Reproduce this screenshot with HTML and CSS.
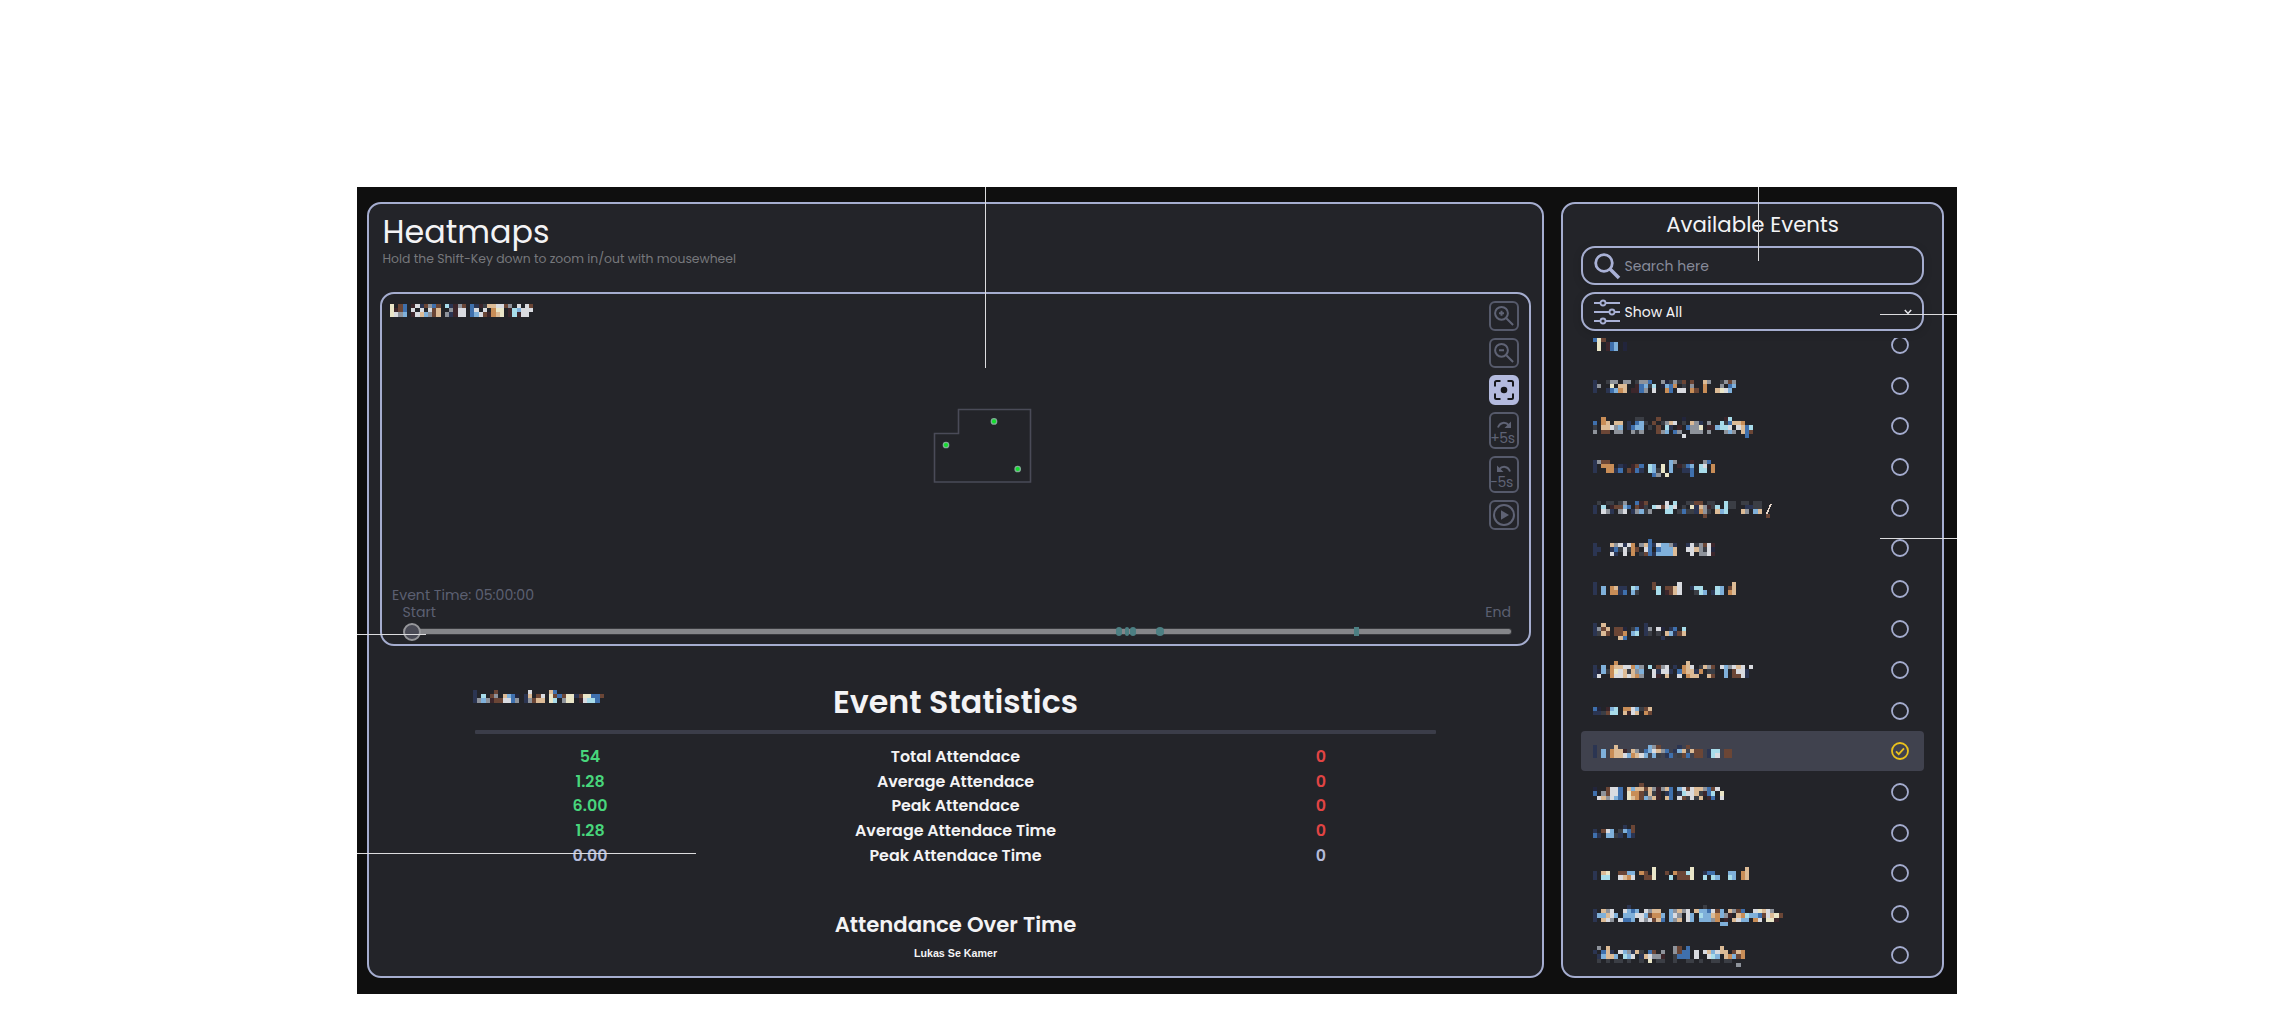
FILE: index.html
```html
<!DOCTYPE html>
<html lang="en">
<head>
<meta charset="utf-8">
<title>Heatmaps</title>
<link rel="stylesheet" href="styles.css">
</head>
<body>
<div class="stage">
  <main class="panel main">
    <h1 class="title">Heatmaps</h1>
    <p class="hint">Hold the Shift-Key down to zoom in/out with mousewheel</p>
    <section class="map">
      <svg class="floor" viewBox="0 0 1148 350" width="1148" height="350">
        <path d="M552.500 139.500h24v-24h72v72.500h-96z" fill="none" stroke="#4a4b58" stroke-width="1.600"/>
        <g fill="#12e02c" stroke="#7fae95" stroke-width="1.300"><circle cx="564" cy="151" r="2.700"/><circle cx="612" cy="127.400" r="2.700"/><circle cx="635.700" cy="175" r="2.700"/></g>
      </svg>
      <div class="map-top">
        <svg class="mosaic map-name" data-name="map"></svg>
        <div class="tools">
          <button class="tool"><svg viewBox="0 0 26 26"><circle cx="10.500" cy="10.300" r="6.400"/><path d="M15.300 15.200l6.800 6.800M10.500 7.800v5M8 10.300h5"/></svg></button>
          <button class="tool"><svg viewBox="0 0 26 26"><circle cx="10.500" cy="10.300" r="6.400"/><path d="M15.300 15.200l6.800 6.800M8 10.300h5"/></svg></button>
          <button class="tool active"><svg viewBox="0 0 26 26"><path d="M4 9.500V5.500a1.500 1.500 0 0 1 1.500-1.500H9.500M16.500 4h4A1.500 1.500 0 0 1 22 5.500v4M22 16.500v4a1.500 1.500 0 0 1-1.500 1.500h-4M9.500 22h-4A1.500 1.500 0 0 1 4 20.500v-4"/><circle class="solid" cx="13" cy="13" r="3.300"/></svg></button>
          <button class="tool tall"><svg viewBox="0 0 26 13"><path d="M7 10.500C9 5 14.500 4.500 18 8.500"/><path class="solid" d="M20 4.500v6.500h-6.500z"/></svg><span>+5s</span></button>
          <button class="tool tall"><svg viewBox="0 0 26 13"><path d="M19 10.500C17 5 11.500 4.500 8 8.500"/><path class="solid" d="M6 4.500v6.500h6.500z"/></svg><span>-5s</span></button>
          <button class="tool"><svg viewBox="0 0 26 26"><circle cx="13" cy="13" r="10"/><path class="solid" d="M10 8.300v9.400l8-4.700z"/></svg></button>
        </div>
      </div>
      <div class="map-foot">
        <div class="time">Event Time: 05:00:00</div>
        <div class="ends"><span>Start</span><span>End</span></div>
        <div class="slider">
          <i class="mark" style="left:710.500px;width:6.500px"></i>
          <i class="mark" style="left:720px;width:4px"></i>
          <i class="mark" style="left:724.500px;width:6.500px"></i>
          <i class="mark" style="left:751px;width:8px"></i>
          <i class="mark square" style="left:949px;width:5px"></i>
          <i class="thumb"></i>
        </div>
      </div>
    </section>
    <section class="stats">
      <div class="stats-head">
        <svg class="mosaic" data-name="stats"></svg>
        <h2>Event Statistics</h2>
      </div>
      <div class="rule"></div>
      <div class="stat"><b class="up">54</b><span>Total Attendace</span><b class="down">0</b></div>
      <div class="stat"><b class="up">1.28</b><span>Average Attendace</span><b class="down">0</b></div>
      <div class="stat"><b class="up">6.00</b><span>Peak Attendace</span><b class="down">0</b></div>
      <div class="stat"><b class="up">1.28</b><span>Average Attendace Time</span><b class="down">0</b></div>
      <div class="stat"><b class="even">0.00</b><span>Peak Attendace Time</span><b class="even">0</b></div>
    </section>
    <h3 class="over">Attendance Over Time</h3>
    <p class="legend">Lukas Se Kamer</p>
  </main>
  <aside class="panel side">
    <h2 class="side-title">Available Events</h2>
    <div class="field search">
      <svg viewBox="0 0 28 28"><circle cx="11" cy="11" r="8.300" stroke-width="2.800"/><path d="M17 17l9 9" stroke-width="3.600"/></svg>
      <span>Search here</span>
    </div>
    <div class="field select">
      <svg viewBox="0 0 28 28"><path d="M1 5h6.500M12.500 5H27M1 14h15.500M21.500 14H27M1 23h6.500M12.500 23H27" stroke-width="2"/><circle cx="10" cy="5" r="2.500" stroke-width="1.800"/><circle cx="19" cy="14" r="2.500" stroke-width="1.800"/><circle cx="10" cy="23" r="2.500" stroke-width="1.800"/></svg>
      <span>Show All</span>
      <svg class="caret" viewBox="0 0 8 6"><path d="M.8 1L4 4.500 7.200 1" stroke-width="1.500"/></svg>
    </div>
    <div class="list"><ul id="events"></ul></div>
  </aside>
  <i class="guide v" style="left:628px;top:0;height:181px"></i>
  <i class="guide v" style="left:1401px;top:0;height:74px"></i>
  <i class="guide h" style="left:1523px;top:127px;width:77px"></i>
  <i class="guide h" style="left:1523px;top:351px;width:77px"></i>
  <i class="guide h" style="left:0;top:447px;width:69px"></i>
  <i class="guide h" style="left:0;top:666px;width:339px"></i>
</div>
<script src="app.js"></script>
</body>
</html>
```
FILE: app.js
```js
const CELL = 4.22;
const COLORS = {
  n: '#2b3552', d: '#22253c', b: '#3f70ad', s: '#7fb0da', c: '#a8dcea', w: '#d9dbe0',
  g: '#8e939b', k: '#3b3e45', o: '#c88d57', t: '#dcbb96', y: '#eae6c8', r: '#6b4636', m: '#3c262b'
};

const NAMES = {
  map: ['y.rb.mwnrgbr.cnmgr.bnmkttwwrg.w.wr', 'ymrb.w.w.wrt..gmww.bw.w.oyy.mcswww', 'ywgs.mwtsgrt.gnmww.bswrmoty.mcmww.'],
  stats: ['n....r.......w....tb...........', 'n.c.rg.tsbd.nt.rw.yrbryynryybbr', 'ngsgmrrwwbg.ngrtt.yc.gyy.mwccb.']
};

/* Each event: vertical offset of the name from the row centre, then its cell rows. */
const EVENTS = [
  [-7.3, ['byr.....', '.y.mbs.d', '.y.mbs.d']],
  [-5.4, ['n..kgg.gg.kggb..gdkgkr.r..tg..kgrg', 'ng..y.tt..mbskc.dsbo.k.g..o...g.bs', 'n..nbsot.mmbg.w..ob.ww.or.o..tyws.']],
  [-9.2, ['..o.......kk...r.....d.........mc.....', 'b.ot.tt.n.bsk.r.kgtw.k.tgn.g..ckbtto..', 'k.ttwgs.nbss.k.r.cn.m.bggy.mmsccw.wtbc', 'g.rr.gg..gkg...rgs.bg..ggg.g...gsg.tbr', '.....................w..............b.']],
  [-6.7, ['ngrr..............sg...m..gb..', 'n.ooo.nd.mrb.cs.y.s.mkbs.cw.o', 'n..oonb.rmbn.csky.s..nnb.cc.o', '..............bg.y.....b.....']],
  [-6.3, ['.k.kk.kg..bmr....w.c..kkrr.kk..ckk.kk.kk', 'n.c.mrrsb.rmk.cwrwcw.k.yntgmkc.ckk..nnkk', 'n.wgn.gw.ngskg...cc.kbkknogk.tsc...tg.st.', '..........................r..............r']],
  [-9.2, ['.............b...............', 'n...tgwnwo.gtbnwssgn..nwkgrwm', 'nn..nbkwkor.wb.bssst..wwtgkwd', 'n...wn.w.o.krbnsssst...w.ggwm']],
  [-7, ['n.............r.....w............t', 'n.s.otnn.cs...rc.rrtw..ncc...cs.rt', 'n.s.oonb.sk....c.mrtw...kcs.ncs.ot']],
  [-6.7, ['n.t.........n.........', 'ngrt.rrd.kb.ng.wd.nb.c', 'nktr.rro.sc.nk.k.tsnrt', '......tb........n.....']],
  [-9, ['.....o................t...............', 'n.s.ottwwosg.c.rgw.n.otw.ktgr.wsgwtw.w', 'ndskoywtktgs..wnwwn.bottno.kk..s.rwwn.', 'nw..owwtwtog..wm.t..w.ott..tr..s.rrwn.']],
  [-3.7, ['bd.msc.oowskrt', 'nnkrcc.tmwt.or']],
  [-6.6, ['n....t.......sgr....n.r..........', 'n.s.ottm.tg.bswtgb.nst.trr.ncc.rr', 'n.s.ottwsotws.sk.nb.krb.rr.ncw.rr']],
  [-8.8, ['...........r...................', 'd..rwwb.tsttrtgmgtb.swrwttgbrw.', 'b.grwwb.yoorktkm.nb.ncwwtkmbc.y', '.wtgwsb.ytorsgtm.tb.wrkwkt.mb.w']],
  [-7.7, ['.......n.r', 'n.rws.ksbr', 'bn.sskn.bn']],
  [-6.8, ['..............y........y............t', 'n.ty..rrss.or.y..r.orrcy..nbb...ss.ot', 'n.cc..wtow..rry...c.rrry..c.cs..cs.ot']],
  [-9.4, ['........n.................k..........', 'n.tgw..wsbs.wgtt..sgtgw.tssbwrs.tgrb..wytwg', 'nsstws.ssswwsroos.swg.ws.csstosgm.tocssbrwtyr', 'n.twg.wbbs.wgwrtb.sgt.ws.sssgo.m.twss.ow.yym', '..............................ss........']],
  [-8.4, ['.g.t...............gr.b.......t.....', 'n.btn.wsgntk.br.g..grbb.w.wtswtt.rto', '.nstts.csw.ntwggm..kbbb.w..wcs.tosro', '.k.k.kk.k..k.y.kk..k..kk.k..kk.kk...', '..................................g.']]
];

function drawMosaic(svg, rows) {
  const width = Math.max(...rows.map(row => row.length)) * CELL;
  const height = rows.length * CELL;
  svg.setAttribute('width', width);
  svg.setAttribute('height', height);
  svg.innerHTML = rows.map((row, y) => [...row].map((key, x) => COLORS[key]
    ? `<rect x="${x * CELL}" y="${y * CELL}" width="${CELL}" height="${CELL}" fill="${COLORS[key]}"/>` : '').join('')).join('');
}

document.querySelectorAll('[data-name]').forEach(svg => drawMosaic(svg, NAMES[svg.dataset.name]));

const list = document.getElementById('events');
EVENTS.forEach(([offset, rows], index) => {
  const item = document.createElement('li');
  const selected = index === 10;
  item.className = selected ? 'event selected' : 'event';
  item.innerHTML = `<svg class="mosaic" style="margin-top:${20 + offset}px"></svg>
    <svg class="radio" viewBox="0 0 18 18"><circle cx="9" cy="9" r="8"/>${selected ? '<path d="M5 9.400l2.700 2.700L13 6.400"/>' : ''}</svg>`;
  drawMosaic(item.querySelector('.mosaic'), rows);
  if (index === 4) {
    item.querySelector('.mosaic').insertAdjacentHTML('beforeend', '<path d="M173.500 13.500L178 3" stroke="#e9d9cc" stroke-width="1.600"/>');
  }
  list.append(item);
});
```
FILE: styles.css
```css
* { box-sizing: border-box; }
body { margin: 0; background: #fff; font-family: Poppins, Inter, sans-serif; }
h1, h2, h3, p, ul { margin: 0; padding: 0; font-weight: 400; }
svg { display: block; flex: none; }

.stage {
  position: relative;
  display: grid;
  grid-template-columns: 1177px 383px;
  column-gap: 17px;
  width: 1600px;
  height: 807px;
  margin: 187px 0 0 357px;
  padding: 15px 13px 16px 10px;
  background: #0f0f0f;
}
.panel {
  border: 2px solid #a5adcf;
  border-radius: 14px;
  background: #232429;
  color: #f3f3f5;
  overflow: hidden;
}

.main { padding: 13px 11px 0; }
.title { padding-left: 2.500px; font-size: 31.800px; line-height: 30px; font-weight: 400; }
.hint { padding-left: 2.500px; margin-top: 2.500px; font-size: 12.400px; line-height: 18px; color: #77787c; white-space: nowrap; }

.map {
  position: relative;
  display: flex;
  flex-direction: column;
  justify-content: space-between;
  height: 354px;
  margin-top: 24.500px;
  border: 2px solid #a5adcf;
  border-radius: 14px;
}
.floor { position: absolute; left: 0; top: 0; }
.map-top { display: flex; justify-content: space-between; padding: 7px 10px 0 7.500px; }
.map-name { margin-top: 3.300px; }
.tools { display: flex; flex-direction: column; gap: 7px; }
.tool {
  display: block;
  width: 30px;
  height: 30px;
  padding: 0;
  border: 2px solid #565a6b;
  border-radius: 6px;
  background: none;
  color: #5f6375;
  font: 15px/15px Poppins, Inter, sans-serif;
}
.tool svg { width: 26px; fill: none; stroke: currentColor; stroke-width: 2; }
.tool .solid { fill: currentColor; stroke: none; }
.tool.active { border-color: #b3bade; background: #b3bade; color: #15161a; }
.tool.tall { height: 37px; text-align: left; }
.tool.tall svg { margin-top: 2px; }
.tool.tall span { display: block; margin: 1px 0 0 -.8px; font-size: 14px; letter-spacing: -.4px; }

.map-foot { padding: 0 18px 10px 10px; font-size: 14.100px; line-height: 17px; color: #5c6072; }
.time { margin-top: -1px; }
.ends { display: flex; justify-content: space-between; padding-left: 10.500px; }
.slider {
  position: relative;
  height: 5px;
  margin: 8.500px 0 0 13px;
  border-radius: 3px;
  background: #85868a;
  box-shadow: 0 0 0 1px #393a3e;
}
.thumb { position: absolute; left: -2.300px; top: -6.500px; width: 18px; height: 18px; border: 2px solid #96979b; border-radius: 50%; background: #494a55; }
.mark { position: absolute; top: -2.500px; height: 9.500px; border-radius: 4px; background: #4c7f83; }
.mark.square { border-radius: 0; }

.stats { width: 961px; margin: 36px auto 0; }
.stats-head { position: relative; display: flex; justify-content: center; }
.stats-head .mosaic { position: absolute; left: -2px; top: 7.500px; }
.stats h2 { font-size: 31.700px; line-height: 40px; font-weight: 600; }
.rule { height: 3.500px; margin: 8px 0 11.500px; border-radius: 1px; background: #3b3d49; }
.stat { display: grid; grid-template-columns: 230px 1fr 230px; justify-items: center; font-size: 15.900px; line-height: 24.700px; font-weight: 600; }
.stat b { font-weight: 600; }
.up { color: #48d67c; }
.down { color: #e24444; }
.even { color: #b4bbda; }
.over { margin-top: 41px; text-align: center; font-size: 21.200px; line-height: 30px; font-weight: 600; }
.legend { margin-top: 6px; text-align: center; font: bold 10.700px/14px "Liberation Sans", sans-serif; }

.side { padding: 6px 18px 0; display: flex; flex-direction: column; }
.side-title { text-align: center; font-size: 21.300px; line-height: 30px; }
.field {
  display: flex;
  align-items: center;
  gap: 4px;
  height: 39px;
  margin-top: 6px;
  padding: 0 10px 0 9.500px;
  border: 2px solid #a5adcf;
  border-radius: 14px;
  font-size: 14px;
  line-height: 20px;
  box-shadow: 0 2px 8px rgba(0, 0, 0, .15);
}
.field svg { width: 28px; height: 28px; fill: none; stroke: #a9b1d6; }
.search { color: #888c9b; }
.select { margin-top: 7px; }
.field .caret { width: 8px; height: 6px; margin-left: auto; stroke: #e9e9ee; }
.list { flex: 1; min-height: 0; margin-top: 7px; overflow: hidden; }
.list ul { margin-top: -13px; list-style: none; }
.event { display: flex; justify-content: space-between; height: 39.650px; margin-bottom: 1px; padding: 0 15.500px 0 12px; border-radius: 4px; }
.event.selected { background: #40424e; }
.mosaic { overflow: visible; shape-rendering: crispEdges; }
.radio { width: 18px; height: 18px; margin-top: 11px; fill: none; stroke: #a5adcf; stroke-width: 1.800; }
.selected .radio { stroke: #eac21c; }

.guide { position: absolute; background: #dcdcde; }
.guide.h { height: 1px; }
.guide.v { width: 1px; }
```
